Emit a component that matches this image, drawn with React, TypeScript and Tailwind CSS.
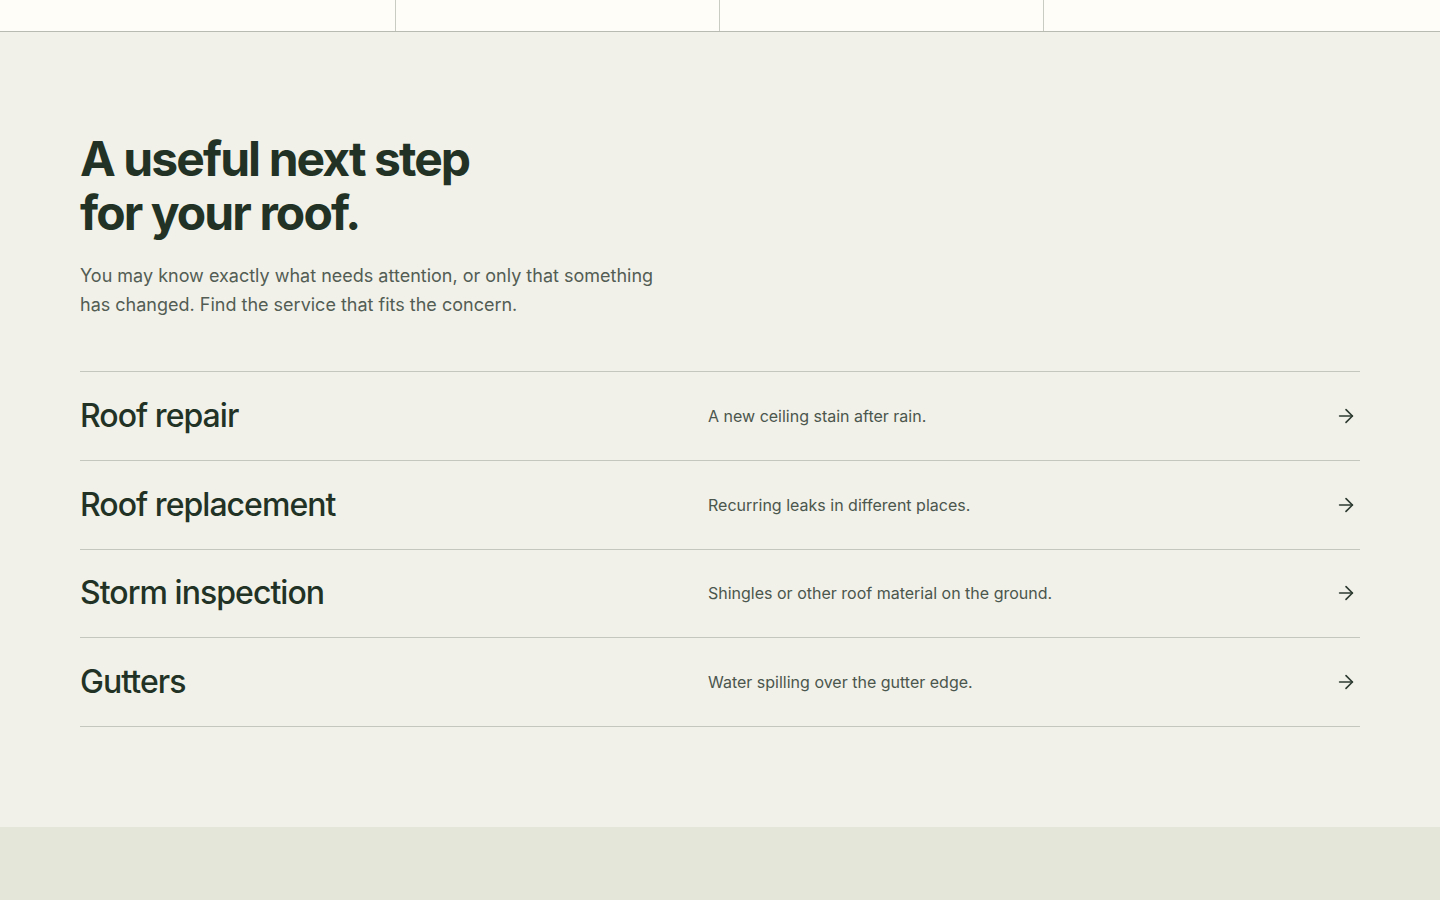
import React from 'react'
import { ArrowRight } from 'lucide-react'

const services = [
  { name: 'Roof repair', sign: 'A new ceiling stain after rain.' },
  { name: 'Roof replacement', sign: 'Recurring leaks in different places.' },
  { name: 'Storm inspection', sign: 'Shingles or other roof material on the ground.' },
  { name: 'Gutters', sign: 'Water spilling over the gutter edge.' },
]

export default function App() {
  return (
    <div className="min-h-screen bg-[#e4e6da] font-['Inter',sans-serif] text-[#223326]">
      {/* tail end of the strip above */}
      <div className="flex h-8 border-b border-[#b7bbb1] bg-[#fefdf8]">
        <div className="w-[395px]" />
        <div className="w-[324px] border-l border-[#c9ccc3]" />
        <div className="w-[324px] border-l border-[#c9ccc3]" />
        <div className="flex-1 border-l border-[#c9ccc3]" />
      </div>

      <section className="bg-[#f1f1e9] px-20 pt-[100px] pb-[100px]">
        <h2 className="text-[48px] font-bold leading-[54px] tracking-[-0.04em] text-[#223326]">
          A useful next step
          <br />
          for your roof.
        </h2>
        <p className="mt-[21px] max-w-[600px] text-[18px] leading-[29px] text-[#535d54]">
          You may know exactly what needs attention, or only that something has changed. Find the
          service that fits the concern.
        </p>

        <ul className="mt-[52px] border-t border-[#c4c7bd]">
          {services.map((s) => (
            <li
              key={s.name}
              className="grid h-[88.75px] grid-cols-[628px_1fr] items-center border-b border-[#c4c7bd]"
            >
              <span className="text-[32px] font-medium tracking-[-0.03em] text-[#223326]">{s.name}</span>
              <div className="flex items-center justify-between">
                <span className="text-[16px] text-[#4b564d]">{s.sign}</span>
                <ArrowRight size={22} strokeWidth={1.75} className="mr-[3px] text-[#2c3a30]" />
              </div>
            </li>
          ))}
        </ul>
      </section>

      <div className="h-[73px]" />
    </div>
  )
}
